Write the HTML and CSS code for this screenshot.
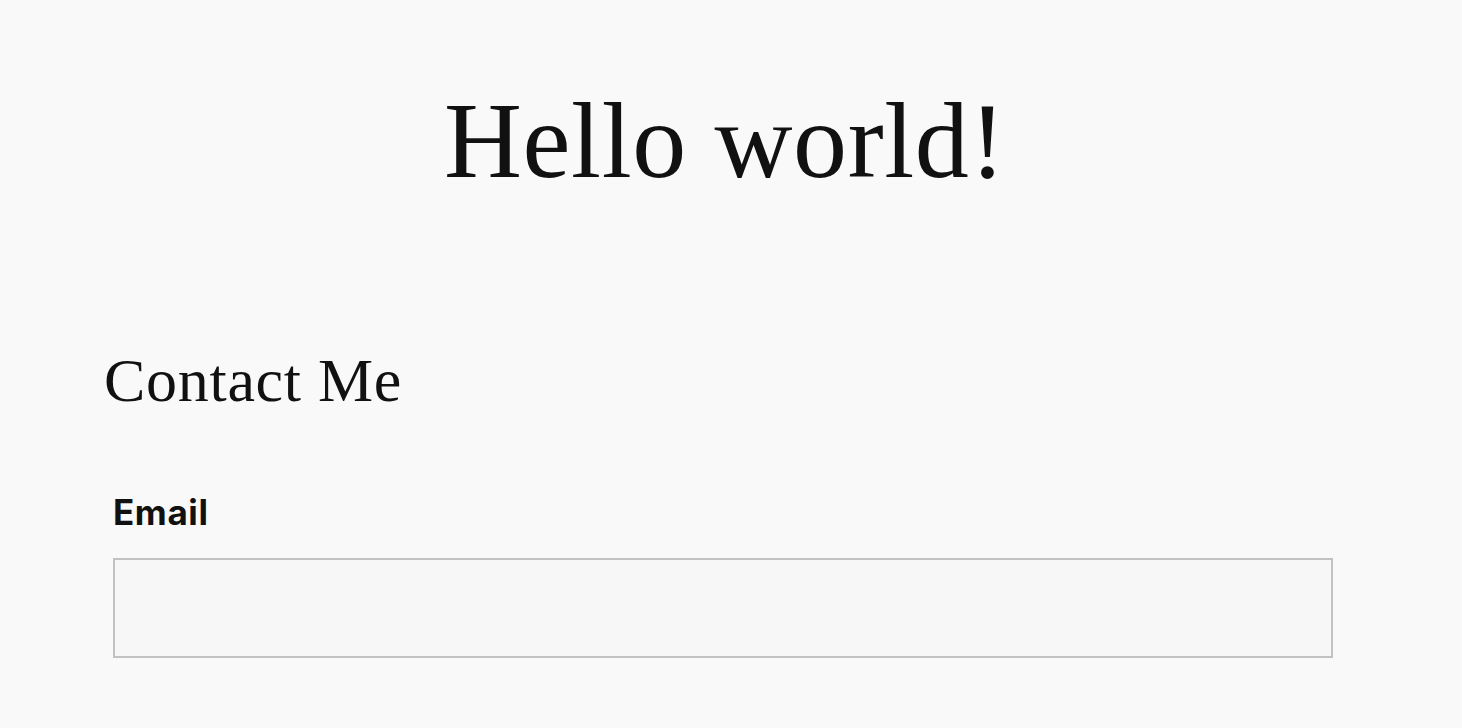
FILE: index.html
```html
<!DOCTYPE html>
<html lang="en">
<head>
<meta charset="utf-8">
<title>Hello world!</title>
<link rel="stylesheet" href="styles.css">
</head>
<body>
<header class="hero">
  <h1 class="hero-title">Hello world!</h1>
</header>
<main class="content">
  <section class="contact">
    <h2 class="contact-title">Contact Me</h2>
    <form class="contact-form">
      <label class="field-label" for="email">Email</label>
      <input class="field-input" id="email" type="email">
    </form>
  </section>
</main>
</body>
</html>
```
FILE: styles.css
```css
html, body {
  margin: 0;
  padding: 0;
  background: #f9f9f9;
  color: #111111;
}
body {
  font-family: "Liberation Serif", "DejaVu Serif", serif;
}
.hero {
  display: flex;
  justify-content: center;
  padding-top: 87px;
}
.hero-title {
  margin: 0;
  font-weight: 400;
  font-size: 108px;
  line-height: 108px;
  letter-spacing: 0.6px;
  padding-right: 12px;
}
.content {
  padding: 154px 129px 0 104px;
}
.contact-title {
  margin: 0;
  font-weight: 400;
  font-size: 62px;
  line-height: 62px;
  letter-spacing: 0.7px;
}
.contact-form {
  display: flex;
  flex-direction: column;
  padding: 84px 0 0 9px;
  gap: 29px;
}
.field-label {
  font-family: Inter, "Noto Sans", sans-serif;
  font-weight: 700;
  font-size: 35px;
  line-height: 34px;
  letter-spacing: 0.6px;
  color: #111111;
}
.field-input {
  box-sizing: border-box;
  width: 1220px;
  height: 100px;
  margin: 0;
  border: 2px solid #c2c2c2;
  background: #f7f7f7;
  border-radius: 0;
  outline: none;
}
```
